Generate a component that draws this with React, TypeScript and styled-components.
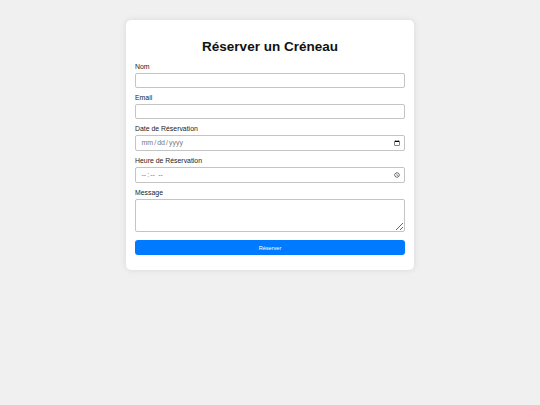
import React from "react";
import styled, { createGlobalStyle } from "styled-components";

const GlobalStyle = createGlobalStyle`
    html, body {
        margin: 0;
        padding: 0;
        background: #f0f0f0;
        font-family: "Liberation Sans", Arial, sans-serif;
    }
`

const Page = styled.div`
    display: flex;
    justify-content: center;
    align-items: flex-start;
    padding-top: 20px;
    min-height: 405px;
    box-sizing: border-box;
`

const Card = styled.div`
    width: 288px;
    box-sizing: border-box;
    padding: 11px 9px 15px;
    background: #ffffff;
    border-radius: 5px;
    box-shadow: 0 0 6px rgba(0, 0, 0, 0.1);
`

const Title = styled.h2`
    margin: 7.5px 0 9px;
    font-size: 13.5px;
    line-height: 15.5px;
    font-weight: bold;
    text-align: center;
    color: #111;
`

const Form = styled.form`
    display: flex;
    flex-direction: column;
`

const Field = styled.div`
    display: flex;
    flex-direction: column;
    margin-bottom: 6.5px;
`

const Label = styled.label`
    font-size: 6.9px;
    line-height: 8px;
    color: #222;
    margin-bottom: 1.5px;
`

const Input = styled.input<{ $tall?: boolean }>`
    box-sizing: border-box;
    width: 100%;
    height: ${p => (p.$tall ? 16 : 15)}px;
    margin: 0;
    padding: 0 4.5px;
    border: 1px solid #c4c4c4;
    border-radius: 2px;
    font-family: "Liberation Sans", Arial, sans-serif;
    font-size: 7px;
    color: #777;
    background: #fff;
    &::-webkit-calendar-picker-indicator {
        width: 6px;
        height: 6px;
        padding: 0;
        margin: 0;
    }
`

const TextArea = styled.textarea`
    display: block;
    box-sizing: border-box;
    width: 100%;
    height: 33px;
    margin: 0;
    padding: 2px 4.5px;
    border: 1px solid #c4c4c4;
    border-radius: 2px;
    font-family: "Liberation Sans", Arial, sans-serif;
    font-size: 7px;
`

const SubmitButton = styled.button`
    margin-top: 2px;
    width: 100%;
    height: 15px;
    padding: 0;
    border: none;
    border-radius: 3px;
    background: #007bff;
    color: #ffffff;
    font-family: "Liberation Sans", Arial, sans-serif;
    font-size: 5.6px;
    cursor: pointer;
`

export default function App() {
    return (
        <>
            <GlobalStyle />
            <Page>
                <Card>
                    <Title>Réserver un Créneau</Title>
                    <Form onSubmit={e => e.preventDefault()}>
                        <Field>
                            <Label htmlFor="nom">Nom</Label>
                            <Input id="nom" type="text" />
                        </Field>
                        <Field>
                            <Label htmlFor="email">Email</Label>
                            <Input id="email" type="email" />
                        </Field>
                        <Field>
                            <Label htmlFor="date">Date de Réservation</Label>
                            <Input id="date" type="date" $tall />
                        </Field>
                        <Field>
                            <Label htmlFor="heure">Heure de Réservation</Label>
                            <Input id="heure" type="time" $tall />
                        </Field>
                        <Field>
                            <Label htmlFor="message">Message</Label>
                            <TextArea id="message" />
                        </Field>
                        <SubmitButton type="submit">Réserver</SubmitButton>
                    </Form>
                </Card>
            </Page>
        </>
    )
}
